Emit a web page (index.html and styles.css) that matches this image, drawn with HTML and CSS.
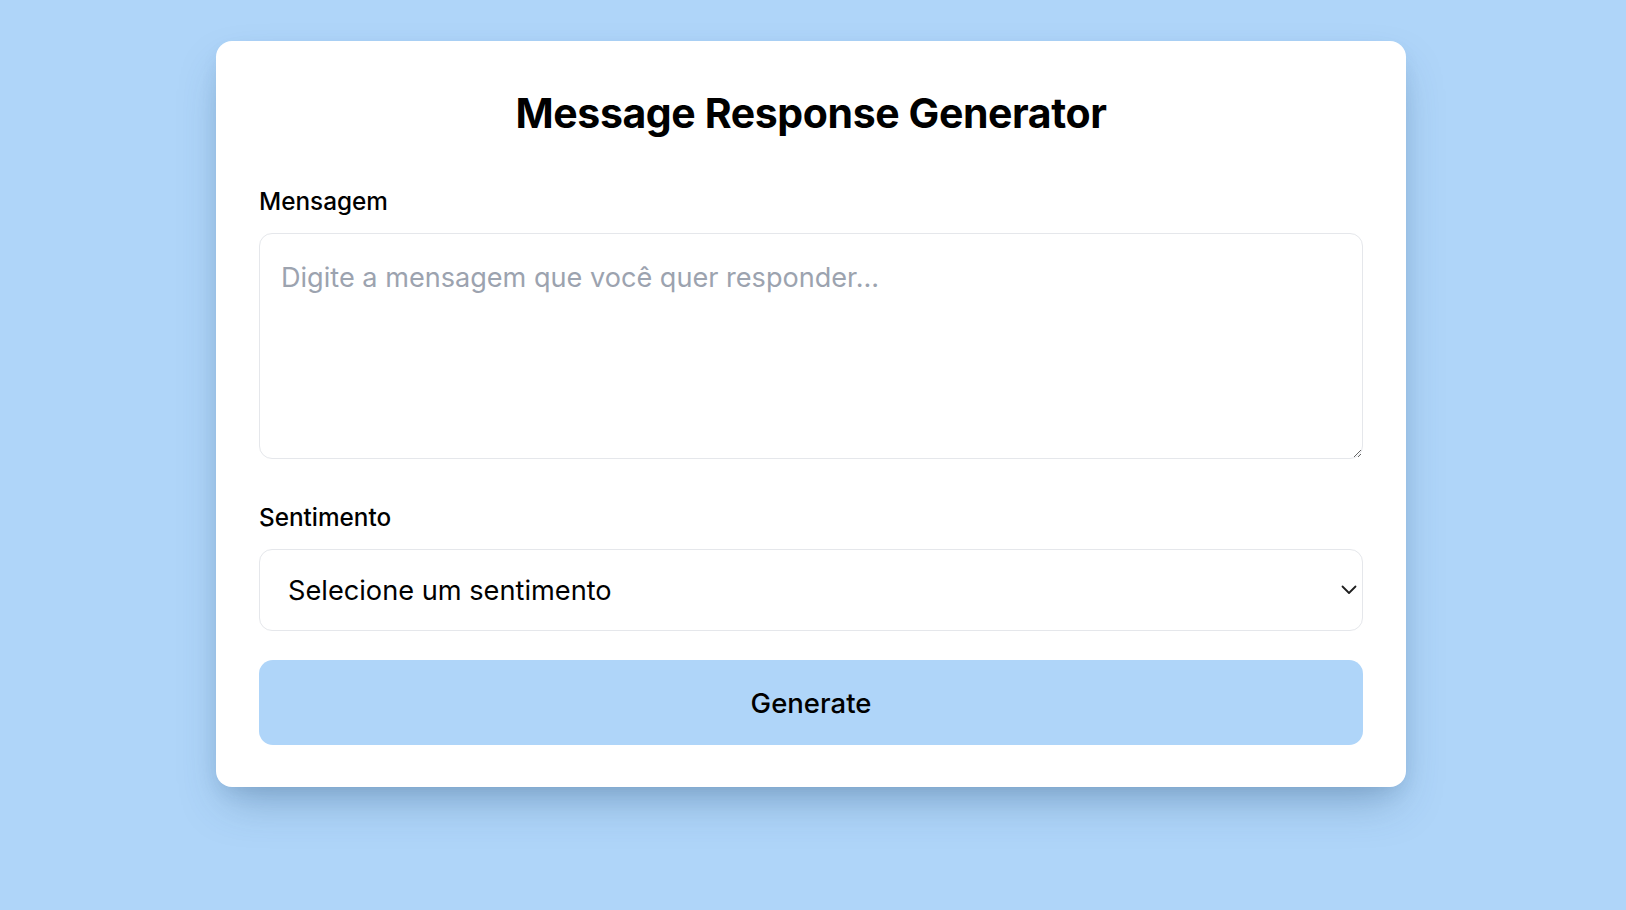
FILE: index.html
```html
<!DOCTYPE html>
<html lang="pt">
<head>
<meta charset="utf-8">
<title>Message Response Generator</title>
<link rel="stylesheet" href="styles.css">
</head>
<body>
  <main class="page">
    <section class="card">
      <h1 class="title">Message Response Generator</h1>
      <form class="form">
        <div class="field">
          <label class="label" for="msg">Mensagem</label>
          <textarea id="msg" class="textarea" placeholder="Digite a mensagem que você quer responder..."></textarea>
        </div>
        <div class="field">
          <label class="label" for="sent">Sentimento</label>
          <div class="select-wrap">
            <select id="sent" class="select">
              <option>Selecione um sentimento</option>
              <option>Positivo</option>
              <option>Neutro</option>
              <option>Negativo</option>
            </select>
            <svg class="chevron" width="16" height="10" viewBox="0 0 16 10" aria-hidden="true">
              <path d="M1.5 1.5 L8 8 L14.5 1.5" fill="none" stroke="#1f1f1f" stroke-width="1.8" stroke-linecap="round" stroke-linejoin="round"/>
            </svg>
          </div>
        </div>
        <button type="button" class="button">Generate</button>
      </form>
    </section>
  </main>
</body>
</html>
```
FILE: styles.css
```css
* { box-sizing: border-box; }

html, body {
  margin: 0;
  padding: 0;
  height: 100%;
}

body {
  background: #afd5f9;
  font-family: Inter, "Noto Sans", "Liberation Sans", sans-serif;
  color: #000;
}

.page {
  display: flex;
  justify-content: center;
  padding-top: 41px;
  padding-right: 4px;
}

.card {
  width: 1190px;
  background: #fff;
  border-radius: 16px;
  padding: 47px 43px 42px;
  box-shadow: 0 22px 45px -10px rgba(40, 80, 120, 0.35), 0 8px 20px -6px rgba(40, 80, 120, 0.15);
}

.title {
  margin: 0;
  text-align: center;
  font-size: 41px;
  line-height: 50px;
  font-weight: 700;
  letter-spacing: -0.4px;
}

.form {
  display: flex;
  flex-direction: column;
  margin-top: 47px;
}

.field {
  display: flex;
  flex-direction: column;
  gap: 16px;
}

.field + .field {
  margin-top: 42px;
}

.label {
  font-size: 24.3px;
  line-height: 32px;
  font-weight: 500;
}

.textarea {
  width: 100%;
  height: 226px;
  border: 1.5px solid #e5e7eb;
  border-radius: 13px;
  padding: 24px 21px;
  font-family: inherit;
  font-size: 27.1px;
  line-height: 40px;
  color: #111;
  resize: vertical;
  outline: none;
}

.textarea::placeholder {
  color: #9ca3af;
}

.select-wrap {
  position: relative;
}

.select {
  width: 100%;
  height: 82px;
  appearance: none;
  -webkit-appearance: none;
  background: #fff;
  border: 1.5px solid #e5e7eb;
  border-radius: 13px;
  padding: 0 60px 0 28px;
  font-family: inherit;
  font-size: 27.2px;
  color: #000;
  outline: none;
}

.chevron {
  position: absolute;
  right: 6px;
  top: 36px;
  pointer-events: none;
}

.button {
  margin-top: 29px;
  height: 85px;
  width: 100%;
  border: none;
  border-radius: 14px;
  background: #afd5f9;
  font-family: inherit;
  font-size: 27.5px;
  font-weight: 500;
  color: #000;
  cursor: pointer;
}
```
